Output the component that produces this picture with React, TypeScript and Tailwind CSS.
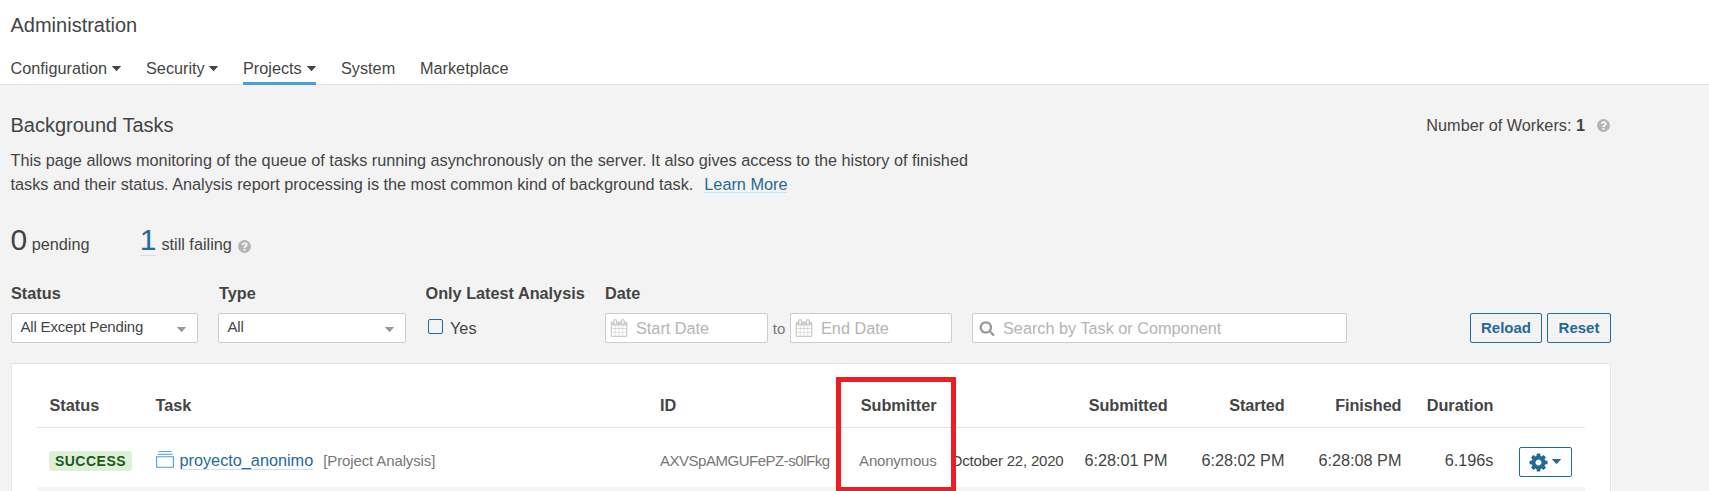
import React from "react";

type IconProps = { className?: string };

const HelpIcon = ({ className }: IconProps) => (
  <svg viewBox="0 0 1792 1792" width="15" height="15" fill="#b4b4b4" className={className}>
    <path d="M1024 1376v-192q0-14-9-23t-23-9h-192q-14 0-23 9t-9 23v192q0 14 9 23t23 9h192q14 0 23-9t9-23zm256-672q0-88-55.5-163t-138.5-116-170-41q-243 0-371 213-15 24 8 42l132 100q7 6 19 6 16 0 25-12 53-68 86-92 34-24 86-24 48 0 85.5 26t37.5 59q0 38-20 61t-68 45q-63 28-115.5 86.5t-52.5 125.5v36q0 14 9 23t23 9h192q14 0 23-9t9-23q0-19 21.5-49.5t54.5-49.5q32-18 49-28.5t46-35 44.5-48 28-60.5 12.5-81zm384 192q0 209-103 385.5t-279.5 279.5-385.5 103-385.5-103-279.5-279.5-103-385.5 103-385.5 279.5-279.5 385.5-103 385.5 103 279.5 279.5 103 385.5z" />
  </svg>
);

const SearchIcon = ({ className }: IconProps) => (
  <svg viewBox="0 0 1792 1792" width="16" height="16" fill="#999" className={className}>
    <path d="M1216 832q0-185-131.5-316.5t-316.5-131.5-316.5 131.5-131.5 316.5 131.5 316.5 316.5 131.5 316.5-131.5 131.5-316.5zm512 832q0 52-38 90t-90 38q-54 0-90-38l-343-342q-179 124-399 124-143 0-273.5-55.5t-225-150-150-225-55.5-273.5 55.5-273.5 150-225 225-150 273.5-55.5 273.5 55.5 225 150 150 225 55.5 273.5q0 220-124 399l343 343q37 37 37 90z" />
  </svg>
);

const CalendarIcon = ({ className }: IconProps) => (
  <svg viewBox="0 0 1792 1792" width="18" height="18" fill="#cdcdcd" className={className}>
    <path d="M192 1664h288v-288h-288v288zm352 0h320v-288h-320v288zm-352-352h288v-320h-288v320zm352 0h320v-320h-320v320zm-352-384h288v-288h-288v288zm736 736h320v-288h-320v288zm-384-736h320v-288h-320v288zm768 736h288v-288h-288v288zm-384-352h320v-320h-320v320zm-352-864v-288q0-13-9.5-22.5t-22.5-9.5h-64q-13 0-22.5 9.5t-9.5 22.5v288q0 13 9.5 22.5t22.5 9.5h64q13 0 22.5-9.5t9.5-22.5zm736 864h288v-320h-288v320zm-384-384h320v-288h-320v288zm384 0h288v-288h-288v288zm32-480v-288q0-13-9.5-22.5t-22.5-9.5h-64q-13 0-22.5 9.5t-9.5 22.5v288q0 13 9.5 22.5t22.5 9.5h64q13 0 22.5-9.5t9.5-22.5zm384-64v1280q0 52-38 90t-90 38h-1408q-52 0-90-38t-38-90v-1280q0-52 38-90t90-38h128v-96q0-66 47-113t113-47h64q66 0 113 47t47 113v96h384v-96q0-66 47-113t113-47h64q66 0 113 47t47 113v96h128q52 0 90 38t38 90z" />
  </svg>
);

const GearIcon = ({ className }: IconProps) => (
  <svg viewBox="0 0 1792 1792" width="21" height="21" fill="#236a97" className={className}>
    <path d="M1152 896q0-106-75-181t-181-75-181 75-75 181 75 181 181 75 181-75 75-181zm512-109v222q0 12-8 23t-20 13l-185 28q-19 54-39 91 35 50 107 138 10 12 10 25t-9 23q-27 37-99 108t-94 71q-12 0-26-9l-138-108q-44 23-91 38-16 136-29 186-7 28-36 28h-222q-14 0-24.5-8.5t-11.5-21.5l-28-184q-49-16-90-37l-141 107q-10 9-25 9-14 0-25-11-126-114-165-168-7-10-7-23 0-12 8-23 15-21 51-66.5t54-70.5q-27-50-41-99l-183-27q-13-2-21-12.5t-8-23.5v-222q0-12 8-23t19-13l186-28q14-46 39-92-40-57-107-138-10-12-10-24 0-10 9-23 26-36 98.5-107.5t94.5-71.5q13 0 26 10l138 107q44-23 91-38 16-136 29-186 7-28 36-28h222q14 0 24.5 8.5t11.5 21.5l28 184q49 16 90 37l142-107q9-9 24-9 13 0 25 10 129 119 165 170 7 8 7 22 0 12-8 23-15 21-51 66.5t-54 70.5q26 50 41 98l183 28q13 2 21 12.5t8 23.5z" />
  </svg>
);

const ProjectIcon = ({ className }: IconProps) => (
  <svg viewBox="0 0 18 17" width="18" height="17" fill="none" stroke="#4b9fd5" className={className}>
    <path d="M2.500 .6h13M1.500 3.300h15" strokeWidth="1" />
    <path d="M.6 5.700h16.800v10.600H.6z" strokeWidth="1.100" />
  </svg>
);

const Caret = ({ className }: IconProps) => (
  <svg viewBox="0 0 10 6" width="9" height="5.4" fill="currentColor" className={className}>
    <path d="M.3 0h9.400q.5 0 .15.450L5.400 5.300q-.4.450-.8 0L.15.450Q-.2 0 .3 0z" />
  </svg>
);

const navItems = [
  { label: "Configuration", menu: true, active: false, width: "w-[110.5px]" },
  { label: "Security", menu: true, active: false, width: "w-[72px]" },
  { label: "Projects", menu: true, active: true, width: "w-[73px]" },
  { label: "System", menu: false, active: false, width: "w-[54px]" },
  { label: "Marketplace", menu: false, active: false, width: "w-[90px]" },
];

function Header() {
  return (
    <header className="flex h-[85px] flex-col justify-between border-b border-[#e6e6e6] bg-white pl-[10.5px] pt-[13px]">
      <h1 className="text-[20px] leading-6">Administration</h1>
      <nav className="-mb-px flex gap-[25px]">
        {navItems.map((n) => (
          <a
            key={n.label}
            className={`flex h-[27px] items-start justify-between whitespace-nowrap border-b-[3px] leading-5 ${n.width} ${n.active ? "border-[#4b9fd5]" : "border-transparent"}`}
          >
            {n.label}
            {n.menu && <Caret className="mt-[8px]" />}
          </a>
        ))}
      </nav>
    </header>
  );
}

function SelectBox({ value, width }: { value: string; width: string }) {
  return (
    <div className={`flex h-[30px] items-center justify-between rounded-[2px] border border-[#cdcdcd] bg-white pl-[8.5px] pr-[11px] text-[15px] tracking-[-0.18px] ${width}`}>
      <span className="-mt-px">{value}</span>
      <Caret className="mt-[3px] text-[#999]" />
    </div>
  );
}

function DateBox({ placeholder, width }: { placeholder: string; width: string }) {
  return (
    <div className={`flex h-[30px] items-center rounded-[2px] border border-[#cdcdcd] bg-white pl-[4px] text-[#b4b4b4] ${width}`}>
      <CalendarIcon className="mr-2" />
      <span>{placeholder}</span>
    </div>
  );
}

function Filters() {
  return (
    <div className="flex h-[63px]">
      <div className="w-[207px]">
        <div className="mb-[10px] font-bold leading-5">Status</div>
        <SelectBox value="All Except Pending" width="w-[187px]" />
      </div>
      <div className="w-[207px]">
        <div className="mb-[10px] pl-px font-bold leading-5">Type</div>
        <SelectBox value="All" width="w-[188px]" />
      </div>
      <div className="w-[180px]">
        <div className="mb-[10px] whitespace-nowrap pl-[0.5px] font-bold leading-5">Only Latest Analysis</div>
        <div className="flex h-[30px] items-center gap-[7px] pl-[3px]">
          <span className="mb-[3px] size-[15px] rounded-[2px] border border-[#236a97]" />
          Yes
        </div>
      </div>
      <div className="w-[367px]">
        <div className="mb-[10px] font-bold leading-5">Date</div>
        <div className="flex items-center">
          <DateBox placeholder="Start Date" width="w-[163px]" />
          <span className="w-[22px] pt-[2px] text-center text-[15px] text-[#777]">to</span>
          <DateBox placeholder="End Date" width="w-[162px]" />
        </div>
      </div>
      <div className="mt-[30px] flex h-[30px] w-[375px] items-center rounded-[2px] border border-[#cdcdcd] bg-white pl-[6px] text-[#b4b4b4]">
        <SearchIcon className="mr-[8px]" />
        Search by Task or Component
      </div>
      <div className="ml-auto mt-[30px] flex gap-[5px] text-[15px] font-bold text-[#236a97]">
        <button className="h-[30px] w-[72px] rounded-[2px] border border-[#236a97]">Reload</button>
        <button className="h-[30px] w-[64px] rounded-[2px] border border-[#236a97]">Reset</button>
      </div>
    </div>
  );
}

const columns =
  "grid grid-cols-[106px_517px_174.5px_102px_127px_104px_117px_117px_92px_92px] whitespace-nowrap";

function TaskTable() {
  return (
    <section className="relative mt-[17px] h-[160px] rounded-t-[2px] border border-[#e6e6e6] bg-white px-[25px]">
      <div className={`${columns} h-[64px] border-b border-[#e6e6e6] pt-[31px] font-bold leading-5`}>
        <span className="pl-[12.5px]">Status</span>
        <span className="pl-[12.5px]">Task</span>
        <span>ID</span>
        <span className="text-right">Submitter</span>
        <span />
        <span className="text-right tracking-[-0.08px]">Submitted</span>
        <span className="text-right tracking-[-0.1px]">Started</span>
        <span className="text-right tracking-[-0.06px]">Finished</span>
        <span className="text-right">Duration</span>
        <span />
      </div>
      <div className={`${columns} h-[59px] pt-[22px] leading-5`}>
        <div className="pl-[12px]">
          <span className="mt-px block h-5 w-[83px] rounded-[3px] bg-[#dff0d8] text-center text-[14px] font-bold leading-5 tracking-[0.5px] text-[#215821]">
            SUCCESS
          </span>
        </div>
        <div className="flex items-start pl-[13px]">
          <ProjectIcon className="mr-[5.5px] mt-px" />
          <a className="h-[20px] border-b border-[#cae3f2] text-[#236a97]">proyecto_anonimo</a>
          <span className="ml-[10px] mt-px text-[15px] tracking-[-0.12px] text-[#777]">[Project Analysis]</span>
        </div>
        <span className="pt-px text-[15px] tracking-[-0.48px] text-[#777]">AXVSpAMGUFePZ-s0lFkg</span>
        <span className="pt-px text-right text-[15px] tracking-[-0.2px] text-[#777]">Anonymous</span>
        <span className="pt-px text-right text-[15px] tracking-[-0.2px]">October 22, 2020</span>
        <span className="text-right">6:28:01 PM</span>
        <span className="text-right">6:28:02 PM</span>
        <span className="text-right">6:28:08 PM</span>
        <span className="text-right">6.196s</span>
        <button className="-mt-[3px] ml-[25.5px] flex h-[30px] w-[53px] items-center gap-[3px] rounded-[2px] border border-[#236a97] pl-[8px] text-[#236a97]">
          <GearIcon />
          <Caret />
        </button>
      </div>
      <div className="h-[40px] bg-[#f5f5f5]" />
      <div className="absolute left-[824px] top-[13px] h-[115px] w-[120px] border-[5px] border-[#ee1c24]" />
    </section>
  );
}

export default function App() {
  return (
    <div className="h-[491px] w-full overflow-hidden bg-[#f3f3f3] font-['Liberation_Sans',Arial,sans-serif] text-[16.25px] text-[#444]">
      <Header />
      <main className="w-[1611px] pl-[11px]">
        <div className="flex h-[63px] justify-between pt-[28px]">
          <h2 className="-ml-[0.5px] text-[20px] leading-6">Background Tasks</h2>
          <div className="flex items-start leading-6">
            Number of Workers:&nbsp;<b>1</b>
            <HelpIcon className="ml-[11px] mt-[5px]" />
          </div>
        </div>
        <p className="-ml-[0.5px] w-[975px] leading-6">
          This page allows monitoring of the queue of tasks running asynchronously on the server. It also gives access to the history of finished
          <br />
          tasks and their status. Analysis report processing is the most common kind of background task.
          <a className="ml-[11px] inline-block h-[21px] border-b border-[#cae3f2] leading-6 text-[#236a97]">Learn More</a>
        </p>
        <div className="flex h-[87px] items-baseline pt-[26px]">
          <span className="-ml-[0.5px] text-[30px] leading-9">0</span>
          <span className="ml-[4.5px] w-[108px]">pending</span>
          <a className="border-b border-[#cae3f2] text-[30px] leading-[30px] text-[#236a97]">1</a>
          <span className="ml-[5px]">still failing</span>
          <HelpIcon className="ml-[5px] translate-y-[4px]" />
        </div>
        <Filters />
        <TaskTable />
      </main>
    </div>
  );
}
